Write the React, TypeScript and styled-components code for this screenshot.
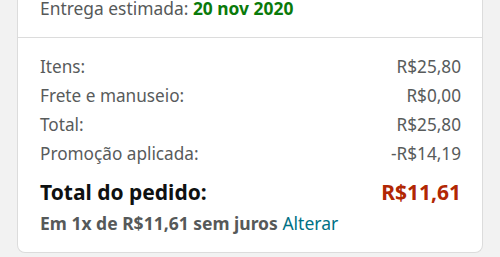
import React from 'react';
import styled, { createGlobalStyle } from 'styled-components';

const GlobalStyle = createGlobalStyle`
  body {
    margin: 0;
    background: #f2f2f2;
    font-family: "Noto Sans", "Open Sans", sans-serif;
    overflow: hidden;
  }
`;

const Page = styled.div`
  padding: 0 17px;
`;

const Card = styled.div`
  margin-top: -6px;
  background: #fff;
  border: 1px solid #dcdcdc;
  border-top: none;
  border-radius: 0 0 8px 8px;
`;

const Delivery = styled.div`
  padding: 0 22px 15px 22px;
  font-size: 17.4px;
  line-height: 28px;
  color: #565959;
  border-bottom: 1px solid #dcdcdc;
`;

const DeliveryDate = styled.span`
  color: #0a7a0a;
  font-weight: 700;
`;

const Summary = styled.div`
  padding: 14px 21px 17px 22px;
`;

const Row = styled.div`
  display: flex;
  justify-content: space-between;
  font-size: 17.2px;
  line-height: 29px;
  color: #585b5b;
`;

const TotalRow = styled.div`
  display: flex;
  justify-content: space-between;
  margin-top: 9px;
  font-size: 21px;
  line-height: 30px;
  font-weight: 700;
  color: #0f1111;
`;

const TotalValue = styled.span<{ $accent?: string }>`
  color: ${(p) => p.$accent ?? 'inherit'};
`;

const Installment = styled.div`
  margin-top: 4px;
  font-size: 17.5px;
  line-height: 24px;
  font-weight: 700;
  color: #565959;
`;

const Link = styled.a`
  color: #007185;
  font-weight: 400;
  text-decoration: none;
`;

const rows = [
  { label: 'Itens:', value: 'R$25,80' },
  { label: 'Frete e manuseio:', value: 'R$0,00' },
  { label: 'Total:', value: 'R$25,80' },
  { label: 'Promoção aplicada:', value: '-R$14,19' },
];

export default function App() {
  return (
    <Page>
      <GlobalStyle />
      <Card>
        <Delivery>
          Entrega estimada: <DeliveryDate>20 nov 2020</DeliveryDate>
        </Delivery>
        <Summary>
          {rows.map((r) => (
            <Row key={r.label}>
              <span>{r.label}</span>
              <span>{r.value}</span>
            </Row>
          ))}
          <TotalRow>
            <span>Total do pedido:</span>
            <TotalValue $accent="#b12704">R$11,61</TotalValue>
          </TotalRow>
          <Installment>
            Em 1x de R$11,61 sem juros <Link href="#">Alterar</Link>
          </Installment>
        </Summary>
      </Card>
    </Page>
  );
}
